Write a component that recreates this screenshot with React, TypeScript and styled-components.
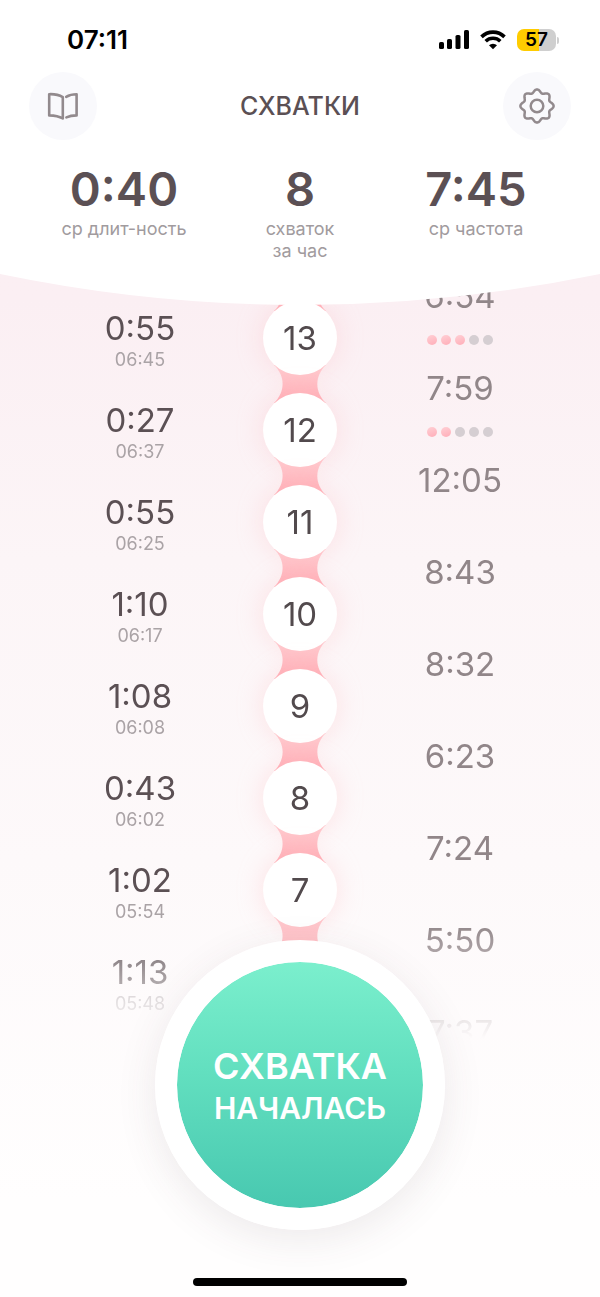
import React from 'react';
import styled, { createGlobalStyle } from 'styled-components';

const ink = '#5b5054';
const muted = '#a19b9e';

const GlobalStyle = createGlobalStyle`
  *, *::before, *::after { box-sizing: border-box; }
  body {
    margin: 0;
    background: #fffdfd;
    font-family: Inter, "Liberation Sans", sans-serif;
    color: ${ink};
  }
  h1, p, ol, dl, dd, dt { margin: 0; padding: 0; }
  ol { list-style: none; }
`;

const Page = styled.div`
  display: flex;
  flex-direction: column;
  min-height: 100vh;
  overflow: hidden;
  background: linear-gradient(180deg, #fbeef2 0, #fbeff3 300px, #fcf5f7 560px, #fdf9fa 860px, #fffefe 1200px);
`;

const Header = styled.header`
  position: relative;
  z-index: 2;
  height: 274px;
  background: #fff;
`;

const Curve = styled.svg`
  position: absolute;
  top: 100%;
  left: 0;
  width: 100%;
  height: 32px;
  margin-top: -1px;
  display: block;
`;

const StatusBar = styled.div`
  display: flex;
  align-items: center;
  justify-content: space-between;
  height: 72px;
  padding: 8px 41px 0 67px;
  color: #000;
`;

const Clock = styled.time`
  font-size: 26px;
  line-height: 32px;
  font-weight: 600;
`;

const StatusIcons = styled.div`
  display: flex;
  align-items: center;
  gap: 11px;
`;

const Battery = styled.div`
  display: flex;
  align-items: center;
  gap: 1px;
`;

const BatteryBody = styled.div`
  width: 39px;
  height: 22px;
  border-radius: 7px;
  background: linear-gradient(90deg, #ffcc00 57%, #cfcfcf 57%);
  font-size: 19px;
  line-height: 22px;
  font-weight: 600;
  text-align: center;
`;

const BatteryTip = styled.span`
  width: 2px;
  height: 7px;
  border-radius: 0 2px 2px 0;
  background: #cfcfcf;
`;

const NavBar = styled.nav`
  display: flex;
  align-items: center;
  justify-content: space-between;
  height: 68px;
  padding: 0 29px;
`;

const Title = styled.h1`
  font-size: 25px;
  line-height: 32px;
  font-weight: 500;
`;

const IconButton = styled.button`
  display: grid;
  place-items: center;
  width: 68px;
  height: 68px;
  padding: 0;
  border: 0;
  border-radius: 50%;
  background: #f9f9fc;
  color: #928a8d;
  cursor: pointer;
`;

const Stats = styled.dl`
  display: grid;
  grid-template-columns: repeat(3, 1fr);
  padding: 20px 6% 0;
  text-align: center;
`;

const Stat = styled.div`
  display: flex;
  flex-direction: column-reverse;
  justify-content: flex-end;
`;

const StatValue = styled.dd`
  font-size: 47px;
  line-height: 58px;
  font-weight: 600;
`;

const StatLabel = styled.dt`
  font-size: 18px;
  line-height: 22px;
  color: ${muted};
`;

const Timeline = styled.main`
  display: grid;
  grid-template-columns: repeat(3, 1fr);
  padding: 0 10%;
  text-align: center;
  mask-image: linear-gradient(180deg, #000 calc(100% - 180px), transparent calc(100% - 64px));
`;

const Durations = styled.ol`
  padding-top: 34px;
`;

const DurationItem = styled.li`
  height: 92px;
`;

const Value = styled.p<{ $soft?: boolean }>`
  font-size: 33px;
  line-height: ${p => (p.$soft ? '42px' : '40px')};
  color: ${p => (p.$soft ? '#918689' : ink)};
`;

const StartTime = styled.time`
  display: block;
  font-size: 18px;
  line-height: 24px;
  color: #aaa3a6;
`;

const Chain = styled.ol`
  display: flex;
  flex-direction: column;
  align-items: center;
  padding-top: 9px;
`;

const Link = styled.li`
  display: flex;
  flex-direction: column;
  align-items: center;
`;

const Neck = styled.svg`
  display: block;
  width: 52px;
  height: 42px;
  margin: -12px 0;
`;

const Bead = styled.div`
  position: relative;
  width: 74px;
  height: 74px;
  border-radius: 50%;
  background: #fff;
  box-shadow: 0 0 26px rgba(255, 186, 190, 0.36);
  font-size: 33px;
  line-height: 74px;
  color: #524a4d;
`;

const Intervals = styled.ol`
  padding-top: 1px;
`;

const IntervalItem = styled.li`
  height: 92px;
`;

const Dots = styled.div`
  display: flex;
  align-items: center;
  justify-content: center;
  gap: 4px;
  height: 46px;
`;

const Dot = styled.span<{ $on: boolean }>`
  width: 10px;
  height: 10px;
  border-radius: 50%;
  background: ${p => (p.$on ? 'linear-gradient(160deg, #ffd0d5, #ffadb8)' : '#d5ced2')};
`;

const Footer = styled.footer`
  position: relative;
  z-index: 1;
  display: flex;
  flex-direction: column;
  align-items: center;
  gap: 48px;
  margin-top: -163px;
  padding-bottom: 11px;
`;

const StartButton = styled.button`
  width: 290px;
  height: 290px;
  padding: 0;
  border: 22px solid #fff;
  border-radius: 50%;
  background: linear-gradient(180deg, #7befcd, #62dfbf 45%, #48c8b0) padding-box;
  box-shadow: 0 10px 40px rgba(80, 60, 70, 0.1);
  font-family: inherit;
  font-weight: 600;
  color: #fff;
  cursor: pointer;
`;

const StartLine = styled.span<{ $large?: boolean }>`
  display: block;
  font-size: ${p => (p.$large ? '36px' : '30px')};
  line-height: ${p => (p.$large ? '46px' : '38px')};
`;

const HomeIndicator = styled.div`
  width: 214px;
  height: 8px;
  border-radius: 4px;
  background: #000;
`;

const durations = [
  ['0:55', '06:45'],
  ['0:27', '06:37'],
  ['0:55', '06:25'],
  ['1:10', '06:17'],
  ['1:08', '06:08'],
  ['0:43', '06:02'],
  ['1:02', '05:54'],
  ['1:13', '05:48'],
];

const numbers = [13, 12, 11, 10, 9, 8, 7];

const intervals: { value: string; strength?: number }[] = [
  { value: '6:54', strength: 3 },
  { value: '7:59', strength: 2 },
  { value: '12:05' },
  { value: '8:43' },
  { value: '8:32' },
  { value: '6:23' },
  { value: '7:24' },
  { value: '5:50' },
  { value: '7:37' },
];

const gearOutline =
  Array.from({ length: 144 }, (_, i) => {
    const a = (i / 144) * Math.PI * 2;
    const r = 15 + 1.6 * Math.cos(8 * a);
    return `${i ? 'L' : 'M'}${(19 + r * Math.sin(a)).toFixed(2)} ${(19 - r * Math.cos(a)).toFixed(2)}`;
  }).join('') + 'Z';

function BookIcon() {
  return (
    <svg width="32" height="30" viewBox="0 0 32 30" fill="none" stroke="currentColor" strokeWidth="2.6" strokeLinejoin="round" strokeLinecap="round" aria-hidden="true">
      <path d="M2.2 3.2C7 3 11.500 3.600 15.800 6.200V27.500C11.500 25 7 24.500 2.200 24.400Z" />
      <path d="M19.200 5.800C22.300 3.900 25.500 3.200 29.600 3.200V24.400C25.600 24.500 22.600 25 19.400 26.400" />
    </svg>
  );
}

function GearIcon() {
  return (
    <svg width="38" height="38" viewBox="0 0 38 38" fill="none" stroke="currentColor" strokeWidth="2.5" strokeLinejoin="round" aria-hidden="true">
      <path d={gearOutline} />
      <circle cx="19" cy="19" r="6.300" />
    </svg>
  );
}

function SignalIcon() {
  return (
    <svg width="30" height="20" viewBox="0 0 30 20" aria-hidden="true">
      <rect x="0" y="12" width="5" height="7" rx="1.6" />
      <rect x="8" y="9" width="5" height="10" rx="1.6" />
      <rect x="16.500" y="5" width="5" height="14" rx="1.6" />
      <rect x="25" y="0" width="5" height="19" rx="1.6" />
    </svg>
  );
}

function WifiIcon() {
  return (
    <svg width="26" height="20" viewBox="0 0 26 20" fill="none" stroke="#000" aria-hidden="true">
      <path d="M1.500 6.900A16.300 16.300 0 0 1 24.500 6.900" strokeWidth="3.600" />
      <path d="M5.700 11.300A10.400 10.400 0 0 1 20.300 11.300" strokeWidth="3.500" />
      <path d="M13 19.300L9 15.300A5.700 5.700 0 0 1 17 15.300Z" fill="#000" stroke="none" />
    </svg>
  );
}

function ChainNeck({ id }: { id: string }) {
  return (
    <Neck viewBox="0 0 52 42" aria-hidden="true">
      <defs>
        <linearGradient id={id} x1="0" y1="0" x2="0" y2="1">
          <stop offset="0.2" stopColor="#ffc8cd" />
          <stop offset="0.850" stopColor="#ffb1b9" />
        </linearGradient>
      </defs>
      <path d="M0 2C11.500 13 11.500 29 0 40H52C40.500 29 40.500 13 52 2Z" fill={`url(#${id})`} />
    </Neck>
  );
}

export default function App() {
  return (
    <>
      <GlobalStyle />
      <Page>
        <Header>
          <StatusBar>
            <Clock>07:11</Clock>
            <StatusIcons>
              <SignalIcon />
              <WifiIcon />
              <Battery>
                <BatteryBody>57</BatteryBody>
                <BatteryTip />
              </Battery>
            </StatusIcons>
          </StatusBar>
          <NavBar>
            <IconButton type="button" aria-label="Журнал">
              <BookIcon />
            </IconButton>
            <Title>СХВАТКИ</Title>
            <IconButton type="button" aria-label="Настройки">
              <GearIcon />
            </IconButton>
          </NavBar>
          <Stats>
            <Stat>
              <StatLabel>ср длит-ность</StatLabel>
              <StatValue>0:40</StatValue>
            </Stat>
            <Stat>
              <StatLabel>
                схваток
                <br />
                за час
              </StatLabel>
              <StatValue>8</StatValue>
            </Stat>
            <Stat>
              <StatLabel>ср частота</StatLabel>
              <StatValue>7:45</StatValue>
            </Stat>
          </Stats>
          <Curve viewBox="0 0 600 32" preserveAspectRatio="none" aria-hidden="true">
            <path d="M0 0V1Q150 32 300 32T600 1V0Z" fill="#fff" />
          </Curve>
        </Header>

        <Timeline>
          <Durations>
            {durations.map(([length, start]) => (
              <DurationItem key={start}>
                <Value>{length}</Value>
                <StartTime>{start}</StartTime>
              </DurationItem>
            ))}
          </Durations>
          <Chain>
            {numbers.map(n => (
              <Link key={n}>
                <ChainNeck id={`neck-${n}`} />
                <Bead>{n}</Bead>
              </Link>
            ))}
            <Link>
              <ChainNeck id="neck-last" />
            </Link>
          </Chain>
          <Intervals>
            {intervals.map(({ value, strength }) => (
              <IntervalItem key={value}>
                <Value $soft>{value}</Value>
                {strength !== undefined && (
                  <Dots role="img" aria-label={`${strength} из 5`}>
                    {[0, 1, 2, 3, 4].map(i => (
                      <Dot key={i} $on={i < strength} />
                    ))}
                  </Dots>
                )}
              </IntervalItem>
            ))}
          </Intervals>
        </Timeline>

        <Footer>
          <StartButton type="button">
            <StartLine $large>СХВАТКА</StartLine>
            <StartLine>НАЧАЛАСЬ</StartLine>
          </StartButton>
          <HomeIndicator />
        </Footer>
      </Page>
    </>
  );
}
